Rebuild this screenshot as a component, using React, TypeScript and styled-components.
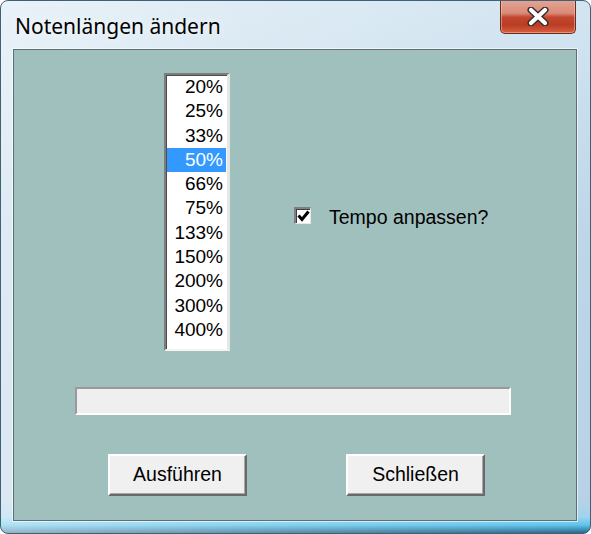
import React from "react";
import styled, { createGlobalStyle } from "styled-components";

const Global = createGlobalStyle`
  html, body { margin: 0; padding: 0; background: #ffffff; }
  body { width: 591px; height: 534px; overflow: hidden; }
  * { box-sizing: border-box; }
`;

const Window = styled.div`
  width: 591px;
  height: 534px;
  display: flex;
  flex-direction: column;
  padding: 0 13px 12px 12px;
  border: 1px solid #3f6077;
  border-radius: 8px;
  background:
    linear-gradient(90deg, rgba(255,255,255,0.5) 0%, rgba(255,255,255,0.25) 45%, rgba(255,255,255,0) 100%),
    linear-gradient(180deg, #d3e5f1 0%, #bdd6e8 45%, #b7d2e6 94%, #9fd3ee 97%, #5cc4ec 98.5%, #2a6688 100%);
  overflow: hidden;
`;

const TitleBar = styled.div`
  height: 49px;
  display: flex;
  justify-content: space-between;
  align-items: flex-start;
  margin-top: -1px;
`;

const TitleText = styled.div`
  font-family: "Noto Sans", "Open Sans", sans-serif;
  font-size: 21px;
  line-height: 24px;
  color: #000;
  padding: 14px 0 0 2px;
  text-shadow: 0 0 8px rgba(255,255,255,0.9);
`;

const CloseButton = styled.div`
  width: 76px;
  height: 34px;
  margin-right: 1px;
  display: flex;
  align-items: center;
  justify-content: center;
  border: 1px solid #6a2c22;
  border-top: none;
  border-radius: 0 0 5px 5px;
  background: linear-gradient(180deg, #e4a594 0%, #d98b78 40%, #c4472f 52%, #b93c24 75%, #d8603e 100%);
  box-shadow: inset 0 0 0 1px rgba(255,210,190,0.45);
`;

const Client = styled.div`
  flex: 1;
  display: flex;
  flex-direction: column;
  background: #a0c0bd;
  border: 1px solid #5c6f78;
  box-shadow: 0 0 0 1px rgba(255,255,255,0.6);
  padding: 23px 0 0 0;
  font-family: "Liberation Sans", Arial, sans-serif;
  color: #000;
`;

const TopRow = styled.div`
  display: flex;
  align-items: flex-start;
  padding-left: 150px;
  gap: 64px;
`;

const ListBox = styled.div`
  width: 66px;
  height: 278px;
  background: #fff;
  border-top: 2px solid #7d7d7d;
  border-left: 2px solid #7d7d7d;
  border-right: 3px solid #e6e6e6;
  border-bottom: 2px solid #f4f4f4;
  box-shadow: inset 1px 1px 0 #4d4d4d;
  padding: 0 1px;
  display: flex;
  flex-direction: column;
`;

const ListItem = styled.div<{ $selected?: boolean }>`
  height: 24.3px;
  line-height: 24.3px;
  font-size: 19px;
  text-align: right;
  padding-right: 3px;
  background: ${(p) => (p.$selected ? "#3399ff" : "transparent")};
  color: ${(p) => (p.$selected ? "#ffffff" : "#000000")};
`;

const CheckRow = styled.label`
  display: flex;
  align-items: flex-start;
  gap: 18px;
  margin-top: 134px;
`;

const CheckBox = styled.div`
  width: 17px;
  height: 17px;
  background: #fff;
  border-top: 2px solid #808080;
  border-left: 2px solid #808080;
  border-right: 1px solid #e8e8e8;
  border-bottom: 1px solid #e8e8e8;
  box-shadow: inset 1px 1px 0 #404040;
  display: flex;
  align-items: center;
  justify-content: center;
`;

const CheckText = styled.span`
  font-size: 19.5px;
  line-height: 20px;
`;

const Progress = styled.div`
  margin: 36px 0 0 61px;
  width: 436px;
  height: 28px;
  background: #efefef;
  border-top: 2px solid #9a9a9a;
  border-left: 2px solid #9a9a9a;
  border-right: 2px solid #ffffff;
  border-bottom: 2px solid #ffffff;
`;

const ButtonRow = styled.div`
  display: flex;
  gap: 99px;
  margin-top: 39px;
  padding-left: 94px;
`;

const Button = styled.div`
  width: 139px;
  height: 42px;
  display: flex;
  align-items: center;
  justify-content: center;
  padding-bottom: 2px;
  background: #f0f0f0;
  border-top: 2px solid #ffffff;
  border-left: 2px solid #ffffff;
  border-right: 2px solid #6a6a6a;
  border-bottom: 2px solid #6a6a6a;
  box-shadow: inset -1px -1px 0 #a8a8a8;
  font-size: 19.5px;
`;

const items = ["20%", "25%", "33%", "50%", "66%", "75%", "133%", "150%", "200%", "300%", "400%"];

export default function App() {
  return (
    <>
      <Global />
      <Window>
        <TitleBar>
          <TitleText>Notenlängen ändern</TitleText>
          <CloseButton>
            <svg width="22" height="19" viewBox="0 0 22 19">
              <path d="M4 3 L18 16 M18 3 L4 16" stroke="#3a2a2a" strokeWidth="7" strokeLinecap="round" />
              <path d="M4 3 L18 16 M18 3 L4 16" stroke="#ffffff" strokeWidth="4.2" strokeLinecap="round" />
            </svg>
          </CloseButton>
        </TitleBar>
        <Client>
          <TopRow>
            <ListBox>
              {items.map((it) => (
                <ListItem key={it} $selected={it === "50%"}>
                  {it}
                </ListItem>
              ))}
            </ListBox>
            <CheckRow>
              <CheckBox>
                <svg width="13" height="12" viewBox="0 0 13 12">
                  <path d="M1.5 5.5 L5 9.5 L11.5 1.5" stroke="#000" strokeWidth="3" fill="none" />
                </svg>
              </CheckBox>
              <CheckText>Tempo anpassen?</CheckText>
            </CheckRow>
          </TopRow>
          <Progress />
          <ButtonRow>
            <Button>Ausführen</Button>
            <Button>Schließen</Button>
          </ButtonRow>
        </Client>
      </Window>
    </>
  );
}
